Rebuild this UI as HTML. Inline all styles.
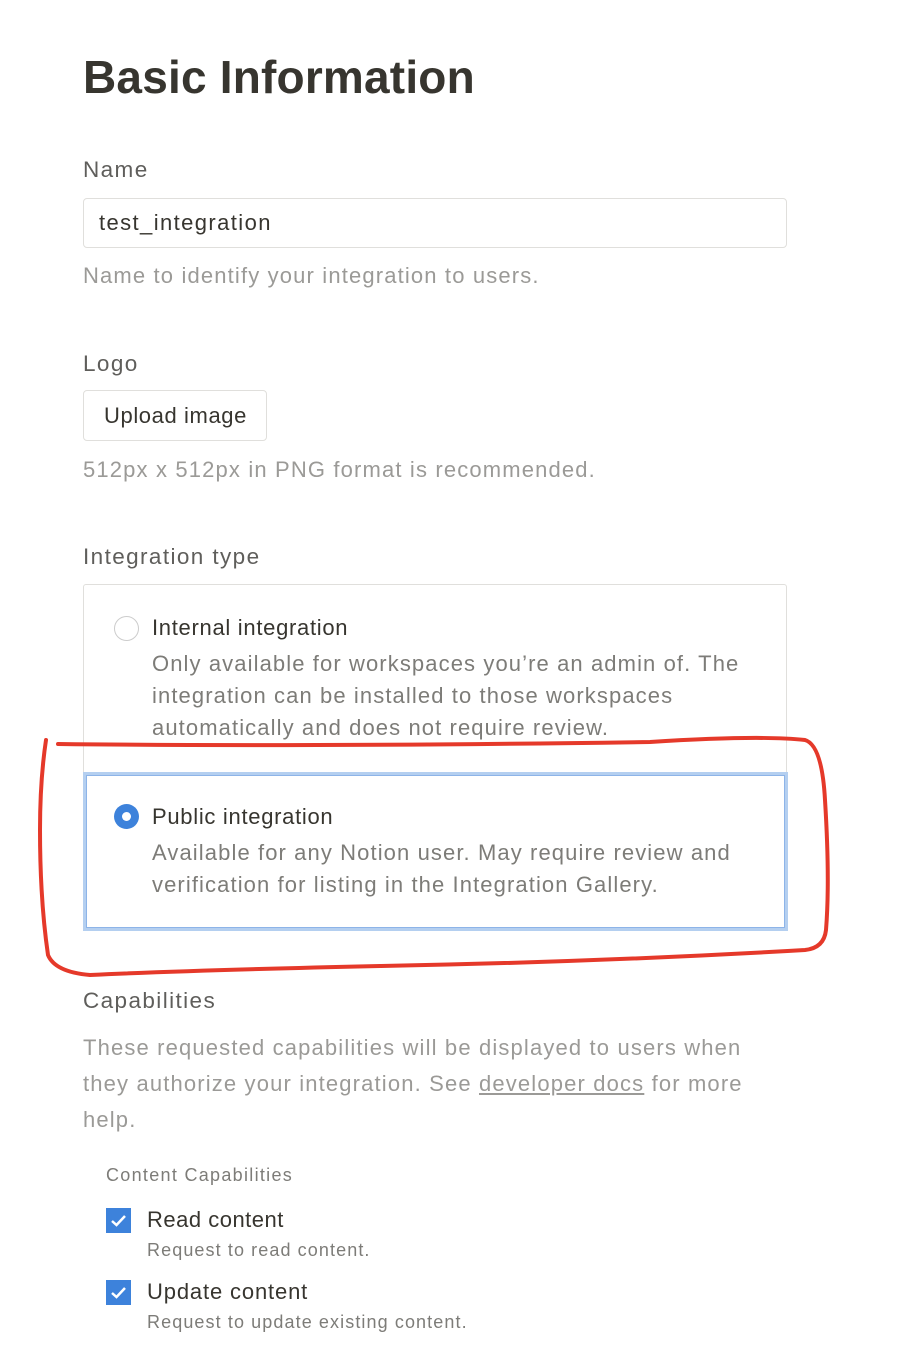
<!DOCTYPE html>
<html><head><meta charset="utf-8"><style>
*{margin:0;padding:0;box-sizing:border-box}
body{width:900px;height:1352px;background:#fff;font-family:"Liberation Sans",sans-serif;position:relative;overflow:hidden;color:#37352f}
.a{position:absolute;white-space:nowrap}
.lab{font-size:22.5px;color:#5f5e5b;letter-spacing:1.4px}
.help{font-size:22px;color:#9b9a97;letter-spacing:1.15px}
.box{position:absolute;border:1px solid #e0dfdc;border-radius:4px}
.t{font-size:22px;color:#37352f;letter-spacing:0.7px}
.d{font-size:22px;color:#7d7c78;line-height:32px;letter-spacing:1.1px}
</style></head><body>
<div class="a" style="left:83px;top:50px;font-size:46px;font-weight:bold;color:#37352f;letter-spacing:0.2px">Basic Information</div>
<div class="a lab" style="left:83px;top:157px">Name</div>
<div class="box" style="left:83px;top:198px;width:704px;height:50px"></div>
<div class="a t" style="left:99px;top:210px;letter-spacing:1.4px">test_integration</div>
<div class="a help" style="left:83px;top:263px">Name to identify your integration to users.</div>
<div class="a lab" style="left:83px;top:351px">Logo</div>
<div class="box" style="left:83px;top:390px;width:184px;height:51px"></div>
<div class="a t" style="left:104px;top:403px;letter-spacing:0.6px">Upload image</div>
<div class="a help" style="left:83px;top:457px">512px x 512px in PNG format is recommended.</div>
<div class="a lab" style="left:83px;top:544px">Integration type</div>
<div class="box" style="left:83px;top:584px;width:704px;height:346px;border-radius:3px"></div>
<div class="a" style="left:114px;top:616px;width:25px;height:25px;border:1px solid #ccc;border-radius:50%"></div>
<div class="a t" style="left:152px;top:615px">Internal integration</div>
<div class="a d" style="left:152px;top:648px">Only available for workspaces you’re an admin of. The<br>integration can be installed to those workspaces<br>automatically and does not require review.</div>
<div class="a" style="left:83px;top:772px;width:705px;height:159px;border:3px solid #b4cff0;"><div style="position:absolute;inset:0;border:1px solid #8db4e8"></div></div>
<div class="a" style="left:114px;top:804px;width:25px;height:25px;border-radius:50%;background:#3d82db"><div style="position:absolute;left:8px;top:8px;width:9px;height:9px;border-radius:50%;background:#fff"></div></div>
<div class="a t" style="left:152px;top:804px">Public integration</div>
<div class="a d" style="left:152px;top:837px">Available for any Notion user. May require review and<br>verification for listing in the Integration Gallery.</div>
<svg class="a" style="left:0;top:0" width="900" height="1352"><path d="M58 744 Q300 747 650 742 Q760 735 805 740 Q822 745 825 800 Q830 880 826 930 Q824 948 805 950 Q600 962 380 966 Q200 970 90 975 Q55 972 48 955 Q40 900 40 830 Q40 780 46 740" fill="none" stroke="#e5392a" stroke-width="4" stroke-linecap="round"/></svg>
<div class="a lab" style="left:83px;top:988px">Capabilities</div>
<div class="a help" style="left:83px;top:1030px;line-height:36px">These requested capabilities will be displayed to users when<br>they authorize your integration. See <span style="text-decoration:underline">developer docs</span> for more<br>help.</div>
<div class="a" style="left:106px;top:1165px;font-size:18px;color:#7d7c78;letter-spacing:1.3px">Content Capabilities</div>
<div class="a" style="left:106px;top:1208px;width:25px;height:25px;background:#3d82db"><svg width="25" height="25"><path d="M6 13 L10.5 17 L19 8" fill="none" stroke="#fff" stroke-width="2.5"/></svg></div>
<div class="a t" style="left:147px;top:1207px;letter-spacing:0.5px">Read content</div>
<div class="a" style="left:147px;top:1240px;font-size:18px;color:#7d7c78;letter-spacing:1.1px">Request to read content.</div>
<div class="a" style="left:106px;top:1280px;width:25px;height:25px;background:#3d82db"><svg width="25" height="25"><path d="M6 13 L10.5 17 L19 8" fill="none" stroke="#fff" stroke-width="2.5"/></svg></div>
<div class="a t" style="left:147px;top:1279px;letter-spacing:0.85px">Update content</div>
<div class="a" style="left:147px;top:1312px;font-size:18px;color:#7d7c78;letter-spacing:1.1px">Request to update existing content.</div>
</body></html>
